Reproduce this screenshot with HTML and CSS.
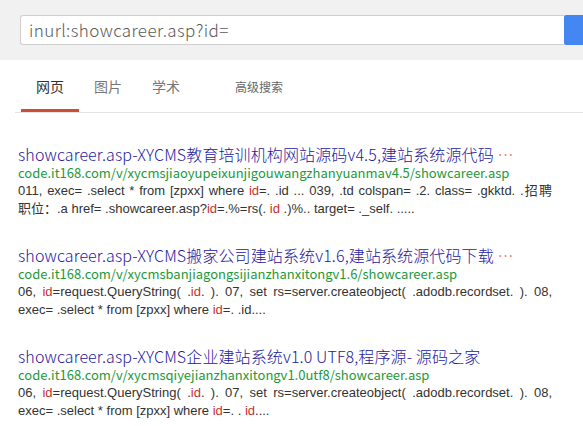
FILE: index.html
```html
<!DOCTYPE html>
<html lang="zh-CN">
<head>
<meta charset="utf-8">
<title>inurl:showcareer.asp?id=</title>
<link rel="stylesheet" href="styles.css">
</head>
<body>
<header class="top">
  <div class="search">
    <div class="search-box">inurl:showcareer.asp?id=</div>
    <div class="search-btn"></div>
  </div>
</header>
<nav class="tabs">
  <a class="tab active">网页</a>
  <a class="tab">图片</a>
  <a class="tab">学术</a>
  <a class="tab adv">高级搜索</a>
</nav>
<main class="results">
  <div class="result">
    <div class="title">showcareer.asp-XYCMS教育培训机构网站源码v4.5,建站系统源代码 <span class="more">…</span></div>
    <div class="url">code.it168.com/v/xycmsjiaoyupeixunjigouwangzhanyuanmav4.5/showcareer.asp</div>
    <div class="snippet">
      <div class="line full">011, exec= .select * from [zpxx] where <em>id</em>=. .id ... 039, .td colspan= .2. class= .gkktd. .招聘</div>
      <div class="line">职位：.a href= .showcareer.asp?<em>id</em>=.%=rs(. <em>id</em> .)%.. target= ._self. .....</div>
    </div>
  </div>
  <div class="result">
    <div class="title">showcareer.asp-XYCMS搬家公司建站系统v1.6,建站系统源代码下载 <span class="more">…</span></div>
    <div class="url">code.it168.com/v/xycmsbanjiagongsijianzhanxitongv1.6/showcareer.asp</div>
    <div class="snippet">
      <div class="line full">06, <em>id</em>=request.QueryString( .<em>id</em>. ). 07, set rs=server.createobject( .adodb.recordset. ). 08,</div>
      <div class="line">exec= .select * from [zpxx] where <em>id</em>=. .id....</div>
    </div>
  </div>
  <div class="result">
    <div class="title">showcareer.asp-XYCMS企业建站系统v1.0 UTF8,程序源- 源码之家</div>
    <div class="url">code.it168.com/v/xycmsqiyejianzhanxitongv1.0utf8/showcareer.asp</div>
    <div class="snippet">
      <div class="line full">06, <em>id</em>=request.QueryString( .<em>id</em>. ). 07, set rs=server.createobject( .adodb.recordset. ). 08,</div>
      <div class="line">exec= .select * from [zpxx] where <em>id</em>=. . <em>id</em>....</div>
    </div>
  </div>
</main>
</body>
</html>
```
FILE: styles.css
```css
html, body {
  margin: 0;
  padding: 0;
  background: #fff;
}
body {
  font-family: "Noto Sans CJK SC", "Liberation Sans", sans-serif;
  overflow: hidden;
}
.top {
  background: #f1f1f1;
  height: 60px;
  box-sizing: border-box;
  padding: 15px 0 0 20px;
}
.search {
  display: flex;
  height: 30px;
}
.search-box {
  width: 544px;
  box-sizing: border-box;
  border: 1px solid #cfcfcf;
  border-right: none;
  border-radius: 3px 0 0 3px;
  background: #fff;
  padding-left: 8px;
  font-size: 17px;
  font-weight: 300;
  letter-spacing: 0.4px;
  line-height: 28px;
  color: #5a5a5a;
}
.search-btn {
  flex: 1;
  background: #4487f2;
  border-radius: 2px 0 0 2px;
}
.tabs {
  display: flex;
  align-items: flex-end;
  height: 53px;
  margin-left: 15px;
  padding-left: 6px;
  border-bottom: 1px solid #e3e3e3;
  box-sizing: border-box;
}
.tab {
  padding: 17px 15px 0;
  height: 50px;
  box-sizing: border-box;
  font-size: 14px;
  line-height: 14px;
  color: #777;
  border-bottom: 3px solid transparent;
}
.tab.active {
  color: #333;
  border-bottom-color: #cf4c37;
}
.tab.adv {
  margin-left: 25px;
  font-size: 12px;
  color: #666;
  padding-top: 18px;
}
.results {
  padding: 31px 0 0 18px;
}
.result {
  margin-bottom: 27px;
}
.result:last-child {
  margin-bottom: 0;
}
.title {
  font-size: 16px;
  line-height: 20px;
  font-weight: 300;
  letter-spacing: 0.12px;
  color: #24209c;
  white-space: nowrap;
}
.more {
  color: #dd5a45;
}
.url {
  font-size: 13px;
  line-height: 18px;
  color: #22993a;
  white-space: nowrap;
}
.snippet {
  width: 534px;
  font-family: "Liberation Sans", "Noto Sans CJK SC", sans-serif;
  font-size: 13px;
  line-height: 18px;
  color: #333;
}
.line {
  white-space: nowrap;
}
.line.full {
  text-align: justify;
  text-align-last: justify;
  white-space: normal;
}
.snippet em {
  font-style: normal;
  color: #c9302c;
}
```
